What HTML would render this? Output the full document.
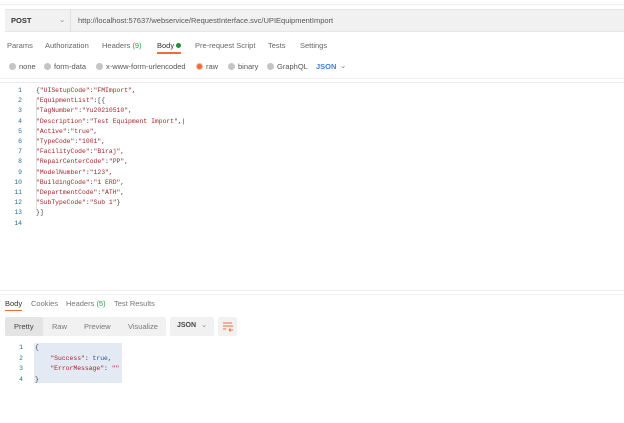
<!DOCTYPE html>
<html><head><style>
*{margin:0;padding:0;box-sizing:border-box}
body{width:624px;height:423px;background:#fff;font-family:"Liberation Sans",sans-serif;font-size:7.5px;color:#555;position:relative;overflow:hidden}
.a{position:absolute;white-space:nowrap}
.mono{font-family:"Liberation Mono",monospace;font-size:6.4px}
.ln{color:#2a6e8c;text-align:right;width:22px}
.k{color:#a3262b}
.dot{display:inline-block;width:7px;height:7px;border-radius:50%;background:#c4c4c4;vertical-align:-1px;margin-right:3px}
</style></head><body>
<div class="a" style="left:0;top:4px;width:624px;height:1px;background:#eee"></div>
<div class="a" style="left:5px;top:9px;width:619px;height:23px;background:#f1f1f1;border-top:1px solid #e6e6e6;border-bottom:1px solid #e6e6e6"></div>
<div class="a" style="left:70px;top:9px;width:1px;height:23px;background:#e0e0e0"></div>
<div class="a" style="left:11px;top:16px;font-weight:bold;color:#333">POST</div>
<div class="a" style="left:59px;top:15px;color:#888">⌄</div>
<div class="a" style="left:78px;top:16px;color:#555">http://localhost:57637/webservice/RequestInterface.svc/UPIEquipmentImport</div>

<div class="a" style="left:7px;top:41px;color:#666">Params</div>
<div class="a" style="left:45px;top:41px;color:#666">Authorization</div>
<div class="a" style="left:102px;top:41px;color:#666">Headers <span style="color:#2f9b4a">(9)</span></div>
<div class="a" style="left:157px;top:41px;color:#333">Body <span style="display:inline-block;width:5px;height:5px;border-radius:50%;background:#1f8f3e;vertical-align:0"></span></div>
<div class="a" style="left:157px;top:52px;width:24px;height:2px;background:#f26b3a"></div>
<div class="a" style="left:195px;top:41px;color:#666">Pre-request Script</div>
<div class="a" style="left:268px;top:41px;color:#666">Tests</div>
<div class="a" style="left:300px;top:41px;color:#666">Settings</div>

<div class="a" style="left:9px;top:62px;color:#555"><span class="dot"></span>none</div>
<div class="a" style="left:44px;top:62px;color:#555"><span class="dot"></span>form-data</div>
<div class="a" style="left:96px;top:62px;color:#555"><span class="dot"></span>x-www-form-urlencoded</div>
<div class="a" style="left:196px;top:62px;color:#555"><span class="dot" style="background:#f26b3a;border:1.5px solid #f5b49a"></span>raw</div>
<div class="a" style="left:228px;top:62px;color:#555"><span class="dot"></span>binary</div>
<div class="a" style="left:267px;top:62px;color:#555"><span class="dot"></span>GraphQL</div>
<div class="a" style="left:316px;top:62px;color:#3c7fe0;font-weight:bold">JSON</div>
<div class="a" style="left:340px;top:61px;color:#3c7fe0">⌄</div>
<div class="a" style="left:0;top:78px;width:624px;height:1px;background:#f0f0f0"></div>
<div class="a" style="left:0;top:82px;width:624px;height:1px;background:#ececec"></div>

<div class="a mono" style="left:0;top:86px;line-height:10.2px">
<div style="display:flex"><div class="ln">1<br>2<br>3<br>4<br>5<br>6<br>7<br>8<br>9<br>10<br>11<br>12<br>13<br>14</div>
<div style="margin-left:14px;color:#333">{<span class="k">"UISetupCode"</span>:<span class="k">"FMImport"</span>,<br>
<span class="k">"EquipmentList"</span>:[{<br>
<span class="k">"TagNumber"</span>:<span class="k">"Yu20210510"</span>,<br>
<span class="k">"Description"</span>:<span class="k">"Test Equipment Import"</span>,|<br>
<span class="k">"Active"</span>:<span class="k">"true"</span>,<br>
<span class="k">"TypeCode"</span>:<span class="k">"1001"</span>,<br>
<span class="k">"FacilityCode"</span>:<span class="k">"Biraj"</span>,<br>
<span class="k">"RepairCenterCode"</span>:<span class="k">"PP"</span>,<br>
<span class="k">"ModelNumber"</span>:<span class="k">"123"</span>,<br>
<span class="k">"BuildingCode"</span>:<span class="k">"1 ERD"</span>,<br>
<span class="k">"DepartmentCode"</span>:<span class="k">"ATH"</span>,<br>
<span class="k">"SubTypeCode"</span>:<span class="k">"Sub 1"</span>}<br>
}]</div></div></div>
<div class="a" style="left:36px;top:99px;width:1px;height:110px;background:#ddd"></div>

<div class="a" style="left:0;top:290px;width:624px;height:1px;background:#ececec"></div>
<div class="a" style="left:0;top:294px;width:624px;height:1px;background:#f2f2f2"></div>
<div class="a" style="left:5px;top:299px;color:#333">Body</div>
<div class="a" style="left:5px;top:310px;width:17px;height:1px;background:#f26b3a"></div>
<div class="a" style="left:31px;top:299px;color:#777">Cookies</div>
<div class="a" style="left:66px;top:299px;color:#777">Headers <span style="color:#2f9b4a">(5)</span></div>
<div class="a" style="left:114px;top:299px;color:#777">Test Results</div>
<div class="a" style="left:5px;top:317px;width:161px;height:19px;background:#f1f1f1;border-radius:2px"></div>
<div class="a" style="left:5px;top:317px;width:38px;height:19px;background:#e4e4e4;border-radius:2px"></div>
<div class="a" style="left:14px;top:322px;color:#444">Pretty</div>
<div class="a" style="left:52px;top:322px;color:#777">Raw</div>
<div class="a" style="left:84px;top:322px;color:#777">Preview</div>
<div class="a" style="left:128px;top:322px;color:#777">Visualize</div>
<div class="a" style="left:170px;top:317px;width:44px;height:19px;background:#f1f1f1;border-radius:2px"></div>
<div class="a" style="left:177px;top:322px;color:#444;font-size:7px;font-weight:bold">JSON</div>
<div class="a" style="left:201px;top:320px;color:#888">⌄</div>
<div class="a" style="left:218px;top:317px;width:19px;height:19px;background:#f1f1f1;border-radius:2px"></div>
<svg class="a" style="left:222px;top:321px" width="11" height="11"><path d="M1 2h9M1 5h9a2 2 0 0 1 0 4H7M1 8h3M7 9l1.5-1.5M7 9l1.5 1.5" stroke="#f26b3a" fill="none" stroke-width="1"/></svg>

<div class="a" style="left:34px;top:343px;width:88px;height:40px;background:#e3eaf3"></div>
<div class="a mono" style="left:0;top:343px;line-height:10.5px">
<div style="display:flex"><div class="ln" style="width:23px">1<br>2<br>3<br>4</div>
<div style="margin-left:12px;color:#333">{<br>&nbsp;&nbsp;&nbsp;&nbsp;<span class="k">"Success"</span>: <span style="color:#1f4fa0">true</span>,<br>&nbsp;&nbsp;&nbsp;&nbsp;<span class="k">"ErrorMessage"</span>: <span class="k">""</span><br>}</div></div></div>
</body></html>
